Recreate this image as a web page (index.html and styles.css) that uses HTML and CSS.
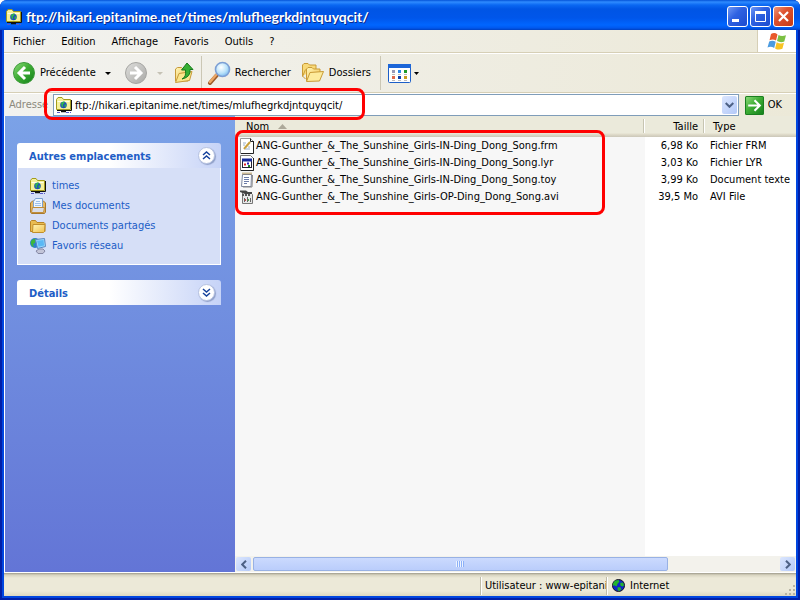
FILE: index.html
```html
<!DOCTYPE html>
<html lang="fr">
<head>
<meta charset="utf-8">
<title>ftp://hikari.epitanime.net/times/mlufhegrkdjntquyqcit/</title>
<link rel="stylesheet" href="styles.css">
</head>
<body>
<svg width="0" height="0" class="defs" aria-hidden="true">
  <defs>
    <linearGradient id="green" x1="0" y1="0" x2="1" y2="1"><stop offset="0" stop-color="#8fdc7c"/><stop offset=".45" stop-color="#3fae35"/><stop offset="1" stop-color="#12801a"/></linearGradient>
    <linearGradient id="grey" x1="0" y1="0" x2="1" y2="1"><stop offset="0" stop-color="#dededc"/><stop offset="1" stop-color="#a9a9a6"/></linearGradient>
    <linearGradient id="gold" x1="0" y1="0" x2="1" y2="1"><stop offset="0" stop-color="#fff6b8"/><stop offset="1" stop-color="#f0bf4c"/></linearGradient>
    <radialGradient id="lens" cx=".4" cy=".35" r=".7"><stop offset="0" stop-color="#fff"/><stop offset=".6" stop-color="#b9e2fa"/><stop offset="1" stop-color="#72b4ec"/></radialGradient>
    <symbol id="ftp" viewBox="0 0 16 16">
      <path d="M.5 12.500V2.500l1.500-2h4l1.500 2h7v10z" fill="#f6f19a" stroke="#a39b1c"/>
      <path d="M1.500 4.500h12" stroke="#fffee6"/>
      <path d="M15.500 3v10.500H1" fill="none" stroke="#111"/>
      <circle cx="7.500" cy="8" r="3.300" fill="#1f4fb8"/>
      <path d="M5 6.500l2-2 2 0-1 2-1 1 0 2-1 1zM8.500 7.500l2 0-1 3-1-1z" fill="#2fb54a"/>
      <path d="M7.500 13v2M5 14.500h5" stroke="#111" stroke-width="1.500"/>
      <path d="M1 15.500h4M10 15.500h5" stroke="#5a5ac8" stroke-dasharray="3 1"/>
    </symbol>
  </defs>
</svg>
<div class="window">
  <header class="titlebar">
    <svg class="i16" aria-hidden="true"><use href="#ftp"/></svg>
    <h1>ftp://hikari.epitanime.net/times/mlufhegrkdjntquyqcit/</h1>
    <div class="winbuttons">
      <button class="winbtn" aria-label="Réduire"><svg viewBox="0 0 19 19"><path d="M4 13.500h7" stroke="#fff" stroke-width="3"/></svg></button>
      <button class="winbtn" aria-label="Agrandir"><svg viewBox="0 0 19 19"><path d="M4.500 5v9.500h10V5" fill="none" stroke="#fff"/><path d="M4 5.500h11" stroke="#fff" stroke-width="3"/></svg></button>
      <button class="winbtn close" aria-label="Fermer"><svg viewBox="0 0 19 19"><path d="M5 5l9 9M14 5l-9 9" stroke="#fff" stroke-width="2.200"/></svg></button>
    </div>
  </header>

  <div class="client">
    <nav class="menubar">
      <button>Fichier</button><button>Edition</button><button>Affichage</button><button>Favoris</button><button>Outils</button><button>?</button>
      <div class="flag">
        <svg width="20" height="19" viewBox="0 0 20 19" aria-hidden="true">
          <path d="M4 2q3.500-2 6.500.4L9 8.600Q6 6.600 2.500 8.300z" fill="#e8592b"/>
          <path d="M11.500 3q3 2 7.500.3l-1.700 6.200Q13.500 11 10 9z" fill="#7bc043"/>
          <path d="M2.200 9.500Q5.500 7.800 8.700 9.800L7.200 16Q4 14 .5 15.500z" fill="#4b9be0"/>
          <path d="M9.700 10.200q3.500 2 7.300.6l-1.600 6q-3.900 1.800-7.300-.4z" fill="#f7c325"/>
        </svg>
      </div>
    </nav>

    <div class="toolbar">
      <button class="tool back">
        <svg width="24" height="24" viewBox="0 0 24 24" aria-hidden="true"><circle cx="12" cy="12" r="10.500" fill="url(#green)" stroke="#3c9a3a"/><path d="M13 6l-6 6 6 6M7.500 12H18" fill="none" stroke="#fff" stroke-width="3"/></svg>
        Précédente
      </button>
      <button class="drop" aria-label="Historique précédent"><svg width="6" height="3" viewBox="0 0 6 3"><path d="M0 0h6L3 3z"/></svg></button>
      <button class="tool fwd" aria-label="Suivante"><svg width="24" height="24" viewBox="0 0 24 24"><circle cx="12" cy="12" r="10.500" fill="url(#grey)" stroke="#a5a5a2"/><path d="M11 6l6 6-6 6M16.500 12H6" fill="none" stroke="#fff" stroke-width="3"/></svg></button>
      <button class="drop off" aria-label="Historique suivant"><svg width="6" height="3" viewBox="0 0 6 3"><path d="M0 0h6L3 3z"/></svg></button>
      <button class="tool up" aria-label="Dossier parent"><svg width="20" height="22" viewBox="0 0 20 22">
        <path d="M1.500 19V7l2-1.500h4L9 7h5v12z" fill="url(#gold)" stroke="#c79a3a"/>
        <path d="M1.500 20.500L5 11.500l13-2-2.500 9z" fill="#fbe68d" stroke="#c79a3a"/>
        <path d="M8 17q4.500-2 3.500-9H7.500L13 1l6 6.500H16Q17 15 8 17z" fill="#37b034" stroke="#187a1c"/></svg></button>
      <span class="sep"></span>
      <button class="tool search">
        <svg width="24" height="24" viewBox="0 0 24 24" aria-hidden="true"><path d="M10 14l-7 8" stroke="#9c5a28" stroke-width="4" stroke-linecap="round"/><path d="M9 14l-6 7" stroke="#eba767" stroke-width="2.500" stroke-linecap="round"/><circle cx="15.500" cy="8.500" r="7" fill="url(#lens)" stroke="#7d9fd4" stroke-width="1.600"/></svg>
        Rechercher
      </button>
      <button class="tool folders">
        <svg width="24" height="22" viewBox="0 0 24 22" aria-hidden="true"><path d="M1.500 14V3l1.500-1.500h4L8.500 3H15v4M1.500 14l3 3" fill="#f8d978" stroke="#c99b36"/><path d="M5.500 19V7L7 5.500h4L12.500 7H19v4" fill="url(#gold)" stroke="#c99b36"/><path d="M5.500 19.500L9 10.500l13.500-1L18.500 19z" fill="#fdeb9c" stroke="#c99b36"/><path d="M1.500 14.500l3-7" stroke="#c99b36"/></svg>
        Dossiers
      </button>
      <span class="sep"></span>
      <button class="tool views" aria-label="Affichages"><svg width="23" height="19" viewBox="0 0 23 19"><rect x=".5" y=".5" width="22" height="18" rx="1" fill="#fff" stroke="#1c5fc8"/><path d="M0 2h23" stroke="#1c66d8" stroke-width="4"/><path d="M4 7.500h3" stroke="#9a9ab8" stroke-width="3"/><path d="M10 7.500h3" stroke="#2f86e8" stroke-width="3"/><path d="M16 7.500h3" stroke="#1f9b2a" stroke-width="3"/><path d="M4 13.500h3" stroke="#e0694a" stroke-width="3"/><path d="M10 13.500h3" stroke="#123fa8" stroke-width="3"/><path d="M16 13.500h3" stroke="#c89a1c" stroke-width="3"/><path d="M4 10.500h3M10 10.500h3M16 10.500h3M4 16.500h3M10 16.500h3M16 16.500h3" stroke="#bbb"/></svg></button>
      <button class="drop views-drop" aria-label="Choisir l'affichage"><svg width="5" height="3" viewBox="0 0 5 3"><path d="M0 0h5L2.500 3z"/></svg></button>
    </div>

    <form class="address">
      <label for="url">Adresse</label>
      <div class="combo">
        <svg class="i16" aria-hidden="true"><use href="#ftp"/></svg>
        <input id="url" type="text" value="ftp://hikari.epitanime.net/times/mlufhegrkdjntquyqcit/" spellcheck="false">
        <button type="button" class="combo-btn" aria-label="Liste des adresses"><svg width="9" height="6" viewBox="0 0 9 6"><path d="M.7 1l3.800 3.800L8.300 1" fill="none" stroke="#4d6185" stroke-width="2"/></svg></button>
      </div>
      <button type="button" class="go"><svg width="19" height="19" viewBox="0 0 18 18" aria-hidden="true"><rect x=".5" y=".5" width="17" height="17" rx="1" fill="url(#green)" stroke="#1a7f20"/><path d="M3 9h11M9 4l5 5-5 5" fill="none" stroke="#fff" stroke-width="2"/></svg>OK</button>
      <div class="mark mark-address"></div>
    </form>

    <main class="content">
      <aside class="side">
        <section class="card">
          <h2>Autres emplacements
            <button class="chev" aria-label="Réduire le volet"><svg width="9" height="9" viewBox="0 0 9 9"><path d="M1 4l3.500-3L8 4M1 8l3.500-3L8 8" fill="none" stroke="#16429c" stroke-width="1.500"/></svg></button>
          </h2>
          <ul>
            <li><svg class="i16" aria-hidden="true"><use href="#ftp"/></svg><a href="#">times</a></li>
            <li><svg class="i16" viewBox="0 0 16 16" aria-hidden="true"><path d="M.5 14V5l2-2h11l2 2v9l-1 1.500h-13z" fill="#e8b961" stroke="#a97a2c"/><path d="M3.500 10V3.500l2-3h7v9.500z" fill="#eef6ff" stroke="#7aa0d0"/><path d="M6 3.500h4M5 5.500h6M5 7.500h6" stroke="#9cc0ea"/><path d="M1.500 14.500l1-5h12l-1 5z" fill="#d9dde8" stroke="#c08e3c"/></svg><a href="#">Mes documents</a></li>
            <li><svg class="i16" viewBox="0 0 16 16" aria-hidden="true"><path d="M.5 13.500v-10l1-1h4l1.500 2h7l1 1v8z" fill="#e9bc52" stroke="#b98526"/><path d="M2.500 14.500l.5-8h12l-.5 7-1 1z" fill="url(#gold)" stroke="#c08e2c"/></svg><a href="#">Documents partagés</a></li>
            <li><svg class="i16" viewBox="0 0 16 16" aria-hidden="true"><circle cx="5" cy="5" r="5" fill="#2c7fd0"/><path d="M1 3q3-3 5-2L5 5 3 6l1 3Q0 8 1 3z" fill="#3cb83c"/><path d="M5.500 1.500l9-1 1 8-8 2z" fill="#9bdcff" stroke="#5a86c0"/><path d="M7 2.800l6.500-.8.6 5.500-5.600 1.300z" fill="#5ab8f5"/><path d="M6 13l3-2h4l2 2-2 2.500H8z" fill="#c3c5d8" stroke="#8588a4"/></svg><a href="#">Favoris réseau</a></li>
          </ul>
        </section>
        <section class="card">
          <h2>Détails
            <button class="chev" aria-label="Développer le volet"><svg width="9" height="9" viewBox="0 0 9 9"><path d="M1 1l3.500 3L8 1M1 5l3.500 3L8 5" fill="none" stroke="#16429c" stroke-width="1.500"/></svg></button>
          </h2>
        </section>
      </aside>

      <div class="list">
        <div class="files">
          <table>
            <colgroup><col><col class="c-size"><col class="c-type"></colgroup>
            <thead><tr><th>Nom<svg class="sort" width="9" height="5" viewBox="0 0 9 5" aria-hidden="true"><path d="M0 5h9L4.500 0z" fill="#aca899"/></svg></th><th class="size">Taille</th><th>Type</th></tr></thead>
            <tbody>
              <tr><td><svg class="doc" viewBox="0 0 14 16" aria-hidden="true"><path d="M.5.500h10l3 3v12H.5z" fill="#fff" stroke="#999"/><path d="M13.500 3v12.500H1M10.500.500v3h3" fill="none" stroke="#222"/><path d="M4 11l6-7" stroke="#c8a03c" stroke-width="2"/><path d="M3 5h3M3 7h2M8 9h2M5 11h5" stroke="#9ab0cc"/></svg>ANG-Gunther_&amp;_The_Sunshine_Girls-IN-Ding_Dong_Song.frm</td><td class="size">6,98 Ko</td><td>Fichier FRM</td></tr>
              <tr><td><svg class="doc" viewBox="0 0 14 16" aria-hidden="true"><path d="M.5.500h10l3 3v12H.5z" fill="#fff" stroke="#777"/><path d="M13.500 3v12.500H1" fill="none" stroke="#222"/><rect x="2.500" y="4.500" width="9" height="8" fill="#fff" stroke="#223"/><path d="M2 5h10" stroke="#162a9a" stroke-width="3"/><path d="M4 9.500h2" stroke="#d22" stroke-width="2"/><path d="M7 8.500h2" stroke="#22b" stroke-width="2"/><path d="M8 11h2" stroke="#282" stroke-width="2"/></svg>ANG-Gunther_&amp;_The_Sunshine_Girls-IN-Ding_Dong_Song.lyr</td><td class="size">3,03 Ko</td><td>Fichier LYR</td></tr>
              <tr><td><svg class="doc" viewBox="0 0 14 16" aria-hidden="true"><path d="M2.500 2.500h9l-.5 12H1.500z" fill="#fff" stroke="#7d86a0"/><path d="M12.500 3l-.5 12H3" fill="none" stroke="#888"/><path d="M2.500 1.500h10" stroke="#a07c30" stroke-width="2" stroke-dasharray="1 1"/><path d="M4 5.500h5M4 7.500h5M4 9.500h5M4 11.500h3" stroke="#6c7ca8"/></svg>ANG-Gunther_&amp;_The_Sunshine_Girls-IN-Ding_Dong_Song.toy</td><td class="size">3,99 Ko</td><td>Document texte</td></tr>
              <tr><td><svg class="doc" viewBox="0 0 14 16" aria-hidden="true"><path d="M2.500 3.500h8l2 2v9h-10z" fill="#e8e8e8" stroke="#777"/><path d="M0 1.500h6l2 1.500h4v2H5L0 3z" fill="#444"/><path d="M2 6h9" stroke="#555" stroke-width="2" stroke-dasharray="2 1"/><path d="M4.500 9v4M7.500 8v5M10.500 9v4" stroke="#666"/><path d="M5.500 10v2" stroke="#c44"/><path d="M8.500 10v2" stroke="#4a4"/></svg>ANG-Gunther_&amp;_The_Sunshine_Girls-OP-Ding_Dong_Song.avi</td><td class="size">39,5 Mo</td><td>AVI File</td></tr>
            </tbody>
          </table>
          <div class="mark mark-files"></div>
        </div>
        <div class="scroll">
          <button class="sbtn" aria-label="Défiler à gauche"><svg width="6" height="9" viewBox="0 0 6 9"><path d="M5 .7L1.200 4.500 5 8.300" fill="none" stroke="#4d6185" stroke-width="2"/></svg></button>
          <div class="track"><div class="thumb"><span class="grip"></span></div></div>
          <button class="sbtn" aria-label="Défiler à droite"><svg width="6" height="9" viewBox="0 0 6 9"><path d="M1 .7l3.800 3.800L1 8.300" fill="none" stroke="#4d6185" stroke-width="2"/></svg></button>
        </div>
      </div>
    </main>

    <footer class="status">
      <div class="user">Utilisateur : www-epitanim</div>
      <div class="zone"><svg width="13" height="13" viewBox="0 0 14 14" aria-hidden="true"><circle cx="7" cy="7" r="6.500" fill="#1026c8" stroke="#111"/><path d="M3 2l4-1 1 2-2 2-1 3-2-1-2 0 0-2zM9 4l3 0 1 3-2 1-2-1zM6 9l3 0 1 2-2 2-2-1z" fill="#22b52c"/></svg>Internet</div>
      <svg class="sizer" width="12" height="12" viewBox="0 0 12 12" aria-hidden="true"><path d="M9 1h2v2H9zM5 5h2v2H5zM9 5h2v2H9zM1 9h2v2H1zM5 9h2v2H5zM9 9h2v2H9z" fill="#b8b4a3"/></svg>
    </footer>
  </div>
</div>
</body>
</html>
```
FILE: styles.css
```css
* { box-sizing: border-box; }

body {
  margin: 0;
  font: 11px/14px "DejaVu Sans Condensed", Tahoma, "DejaVu Sans", sans-serif;
  color: #000;
  background: #fff;
}

button {
  font: inherit;
  color: inherit;
  background: none;
  border: 0;
  padding: 0;
}

svg { display: block; flex: none; }
.defs { position: absolute; }
.i16 { width: 16px; height: 16px; }

.window {
  display: flex;
  flex-direction: column;
  height: 100vh;
  border-radius: 7px 7px 0 0;
  background: #0046e0;
  box-shadow: inset 2px -2px #001fa8, inset -2px 0 #001fa8;
  overflow: hidden;
}

/* Title bar */
.titlebar {
  display: flex;
  align-items: center;
  flex: none;
  height: 30px;
  padding: 3px 6px 0;
  background: linear-gradient(#0453d8 0, #2f8bff 2px, #0a68f2 5px, #0055e5 9px, #0056ea 18px, #0066ff 25px, #0058ee 28px, #0040c0 30px);
}

.titlebar h1 {
  flex: 1;
  margin: 0 0 0 4px;
  font: bold 14px/20px Lato, "Open Sans", sans-serif;
  color: #fff;
  text-shadow: 1px 1px 0 #0a2a8c;
  white-space: nowrap;
}

.winbuttons { display: flex; gap: 2px; }

.winbtn {
  width: 21px;
  height: 21px;
  border: 1px solid #fff;
  border-radius: 3px;
  background: linear-gradient(135deg, #6f97f5, #2f62e2 40%, #1b4bcf);
}

.winbtn.close { background: linear-gradient(135deg, #f0967a, #de5230 40%, #c63a14); }

.client {
  display: flex;
  flex-direction: column;
  flex: 1;
  min-height: 0;
  margin: 0 4px 4px;
  background: #ece9d8;
}

/* Menu bar */
.menubar {
  display: flex;
  flex: none;
  height: 24px;
  padding-left: 1px;
  background: linear-gradient(90deg, #f2f2ef, #ece9d8);
  border-bottom: 1px solid #fff;
  box-shadow: inset 0 -1px #d6cfb6;
}

.menubar button { padding: 0 8px; }

.flag {
  display: flex;
  align-items: center;
  justify-content: center;
  width: 39px;
  height: 22px;
  margin-left: auto;
  border-left: 1px solid #d6cfb6;
  background: #fff;
}

/* Toolbar */
.toolbar {
  display: flex;
  align-items: center;
  flex: none;
  height: 39px;
  padding-left: 8px;
  background: linear-gradient(90deg, #f2f2ef, #ece9d8);
  border-bottom: 1px solid #d6cfb6;
}

.tool {
  display: flex;
  align-items: center;
  gap: 4px;
  white-space: nowrap;
}

.drop { padding: 0 9px; }
.drop.off { fill: #c5c2b5; }
.fwd { margin-left: 4px; }
.sep { width: 1px; height: 34px; margin: 0 5px 0 6px; background: #cbc7b5; }
.up { margin: 0 1px 0 2px; }
.folders { margin: 0 3px 0 10px; }
.views { margin-left: 2px; }
.views-drop { padding: 0 3px; }

/* Address bar */
.address {
  position: relative;
  display: flex;
  align-items: center;
  flex: none;
  height: 23px;
  padding: 0 14px 0 5px;
  background: linear-gradient(90deg, #f2f2ef, #ece9d8);
  border-top: 1px solid #fff;
}

.address label { width: 44px; color: #8c897c; }

.combo {
  display: flex;
  align-items: center;
  flex: 1;
  height: 22px;
  padding: 0 1px 0 2px;
  border: 1px solid #7f9db9;
  background: #fff;
}

.combo input {
  flex: 1;
  min-width: 0;
  height: 18px;
  padding: 0 3px;
  border: 0;
  outline: 0;
  font: inherit;
  color: #000;
  background: none;
}

.combo-btn {
  display: flex;
  align-items: center;
  justify-content: center;
  width: 15px;
  height: 18px;
  border-radius: 2px;
  background: linear-gradient(135deg, #dbe6fe, #b3c9f8);
}

.go { display: flex; align-items: center; gap: 4px; margin-left: 6px; }

/* Red outlines drawn over the window */
.mark {
  position: absolute;
  z-index: 2;
  border: 3px solid #f00;
  border-radius: 8px;
  pointer-events: none;
}

.mark-address { left: 40px; top: -6px; width: 321px; height: 32px; }
.mark-files { left: 0; top: 14px; width: 370px; height: 85px; }

/* Content */
.content {
  display: flex;
  flex: 1;
  min-height: 0;
  border-left: 1px solid #fff;
  border-bottom: 1px solid #fff;
}

.side {
  flex: none;
  width: 230px;
  padding: 27px 14px 0 12px;
  background: linear-gradient(#7ba2e7, #6375d6);
}

.card { margin-bottom: 15px; }

.card h2 {
  display: flex;
  align-items: center;
  justify-content: space-between;
  height: 25px;
  margin: 0;
  padding: 3px 6px 0 12px;
  border-radius: 3px 3px 0 0;
  font-size: 11px;
  line-height: 14px;
  color: #215dc6;
  background: linear-gradient(90deg, #fff 45%, #c6d3f7);
}

.chev {
  display: flex;
  align-items: center;
  justify-content: center;
  width: 17px;
  height: 17px;
  margin-bottom: 4px;
  border: 1px solid #b6c2e0;
  border-radius: 50%;
  background: #fff;
  box-shadow: 1px 1px 1px #8f9fc8;
}

.card ul {
  margin: 0;
  padding: 8px 12px;
  border: 1px solid #fff;
  border-top: 0;
  list-style: none;
  background: #d6dff7;
}

.card li { display: flex; align-items: center; gap: 6px; height: 20px; }
.card a { color: #215dc6; text-decoration: none; }

/* File list */
.list { display: flex; flex-direction: column; flex: 1; min-width: 0; }

.files {
  position: relative;
  flex: 1;
  background: linear-gradient(#f7f7f7, #f7f7f7) no-repeat 0 0 / calc(100% - 151px) 100% #fff;
}

table { width: 100%; table-layout: fixed; border-collapse: collapse; }
.c-size { width: 60px; }
.c-type { width: 91px; }

th {
  height: 21px;
  padding: 0 0 0 8px;
  font-weight: normal;
  text-align: left;
  background: linear-gradient(90deg, transparent calc(100% - 2px), #c7c5b2 calc(100% - 2px), #c7c5b2 calc(100% - 1px), #fff calc(100% - 1px)) no-repeat 0 3px / 100% 14px, linear-gradient(#ebeadb 17px, #e2decd 18px, #cbc7b8 21px);
}

th:first-child { padding-left: 11px; }
th:last-child { background: linear-gradient(#ebeadb 17px, #e2decd 18px, #cbc7b8 21px); }
.sort { display: inline-block; margin: 0 0 1px 9px; }
td { height: 17px; padding: 0 0 0 5px; white-space: nowrap; }
.size, th.size { padding: 0 7px 0 0; text-align: right; }
.doc { display: inline-block; width: 14px; height: 16px; margin-right: 2px; vertical-align: middle; }

/* Horizontal scroll bar */
.scroll { display: flex; flex: none; height: 16px; padding: 1px; background: #f3f2ec; }

.sbtn {
  display: flex;
  align-items: center;
  justify-content: center;
  width: 15px;
  height: 14px;
  border-radius: 2px;
  background: linear-gradient(135deg, #dbe6fe, #b3c9f8);
}

.track { flex: 1; padding: 0 2px; }

.thumb {
  display: flex;
  align-items: center;
  justify-content: center;
  width: 79%;
  height: 14px;
  border: 1px solid #98b1e4;
  border-radius: 2px;
  background: linear-gradient(#cbdafe, #bacdfb);
}

.grip { width: 8px; height: 6px; background: repeating-linear-gradient(90deg, #eef4fe 0 1px, #8cb0f8 1px 2px); }

/* Status bar */
.status {
  display: flex;
  align-items: center;
  justify-content: flex-end;
  flex: none;
  height: 23px;
  padding-top: 2px;
  background: linear-gradient(#9d9a8b 0, #d8d4c0 2px, #ece9d8 5px, #ece9d8 18px, #dcd7c1);
}

.user, .zone {
  display: flex;
  align-items: center;
  height: 18px;
  border-left: 1px solid #c0bca9;
  box-shadow: inset 1px 0 #fff;
  white-space: nowrap;
  overflow: hidden;
}

.user { width: 126px; padding-left: 4px; }
.zone { width: 178px; gap: 5px; padding-left: 5px; }
.sizer { align-self: flex-end; }
```
